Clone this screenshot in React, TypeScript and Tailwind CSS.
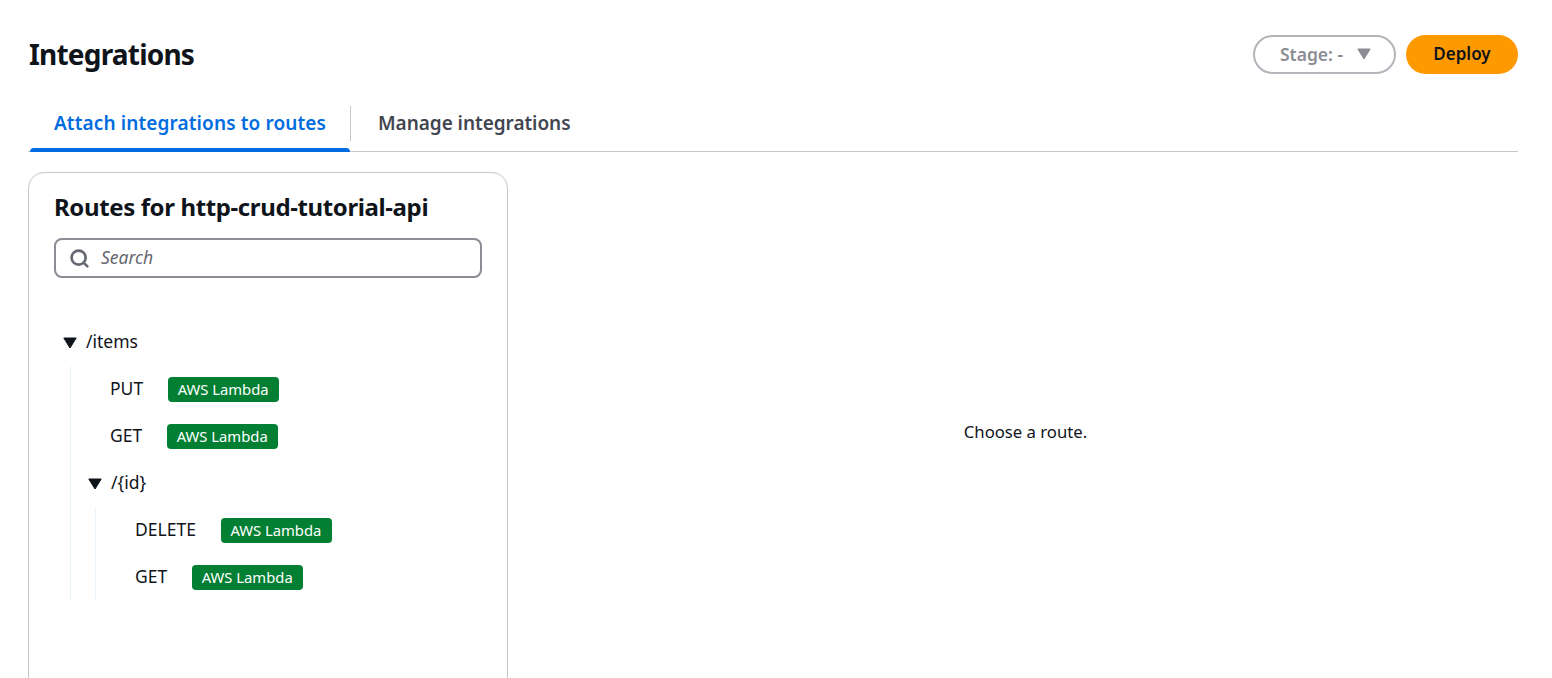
import { Search } from "lucide-react";

const Caret = ({ color = "#0f141a", size = 14 }: { color?: string; size?: number }) => (
  <svg width={size} height={size} viewBox="0 0 14 14" className="shrink-0">
    <path d="M.8 2h12.4L7 12z" fill={color} stroke={color} strokeWidth="1" strokeLinejoin="round" />
  </svg>
);

const Badge = () => (
  <span className="inline-flex h-[25px] w-[111px] items-center justify-center rounded-[4px] bg-[#037f33] pr-px text-[14.8px] leading-none text-white">
    AWS Lambda
  </span>
);

const Method = ({ name }: { name: string }) => (
  <div className="flex h-[47px] items-center gap-[25px] text-[#0f141a]">
    <span className="-translate-y-px text-[17.5px]">{name}</span>
    <Badge />
  </div>
);

export default function App() {
  return (
    <div className="h-[678px] overflow-hidden bg-white pl-[28px] pr-[34px] font-['Noto_Sans',sans-serif] text-[16px]">
      <header className="flex h-[106px] items-center justify-between pt-[2px]">
        <h1 className="ml-px text-[28px] font-bold tracking-[-0.8px] text-[#0f141a]">Integrations</h1>
        <div className="flex items-center gap-[10px]">
          <button className="flex h-[39px] w-[143px] items-center justify-center gap-[14px] rounded-full border-2 border-[#b4b4bb] pl-[2px] text-[17.5px] font-semibold text-[#8c8c94]">
            <span>Stage: -</span>
            <Caret color="#8c8c94" />
          </button>
          <button className="h-[39px] w-[112px] rounded-full bg-[#ff9900] text-[17px] font-semibold text-[#0f141a]">
            Deploy
          </button>
        </div>
      </header>

      <nav className="flex h-[46px] border-b border-[#c6c6cd] text-[19px] font-semibold">
        <div className="relative flex w-[322px] items-center justify-center pb-[10px] pl-[2px] tracking-[0.12px] text-[#006ce0]">
          Attach integrations to routes
          <span className="absolute bottom-[-1px] left-[2px] right-0 h-[4px] rounded-t-[4px] bg-[#006ce0]" />
        </div>
        <div className="mb-[10px] w-px bg-[#c6c6cd]" />
        <div className="flex items-center pb-[10px] pl-[27px] tracking-[-0.05px] text-[#424650]">Manage integrations</div>
      </nav>

      <div className="mt-[20px] flex gap-[24px]">
        <aside className="h-[640px] w-[480px] shrink-0 rounded-[16px] border border-[#c6c6cd] px-[25px] pt-[18px]">
          <h2 className="text-[24px] font-bold leading-[32px] tracking-[-0.38px] text-[#0f141a]">
            Routes for http-crud-tutorial-api
          </h2>
          <div className="mt-[15px] flex h-[40px] items-center gap-[11px] rounded-[8px] border-2 border-[#8c8c94] pl-[13px]">
            <Search size={21} strokeWidth={3} className="text-[#656871]" />
            <span className="-translate-y-px text-[17.5px] italic text-[#656871]">Search</span>
          </div>

          <div className="mt-[41px] pl-[9px]">
            <div className="flex h-[47px] items-center gap-[9px] text-[#0f141a]">
              <Caret />
              <span className="-translate-y-px text-[17.5px]">/items</span>
            </div>
            <div className="ml-[7px] border-l border-[#e8f3fa] pl-[39px]">
              <Method name="PUT" />
              <Method name="GET" />
            </div>
            <div className="ml-[7px] border-l border-[#e8f3fa] pl-[17px]">
              <div className="flex h-[47px] items-center gap-[9px] text-[#0f141a]">
                <Caret />
                <span className="-translate-y-px text-[17.5px]">/{"{id}"}</span>
              </div>
              <div className="ml-[7px] border-l border-[#e8f3fa] pl-[39px]">
                <Method name="DELETE" />
                <Method name="GET" />
              </div>
            </div>
          </div>
        </aside>
        <main className="flex h-[520px] flex-1 items-center justify-center pl-px text-[16.7px] text-[#0f141a]">
          Choose a route.
        </main>
      </div>
    </div>
  );
}
